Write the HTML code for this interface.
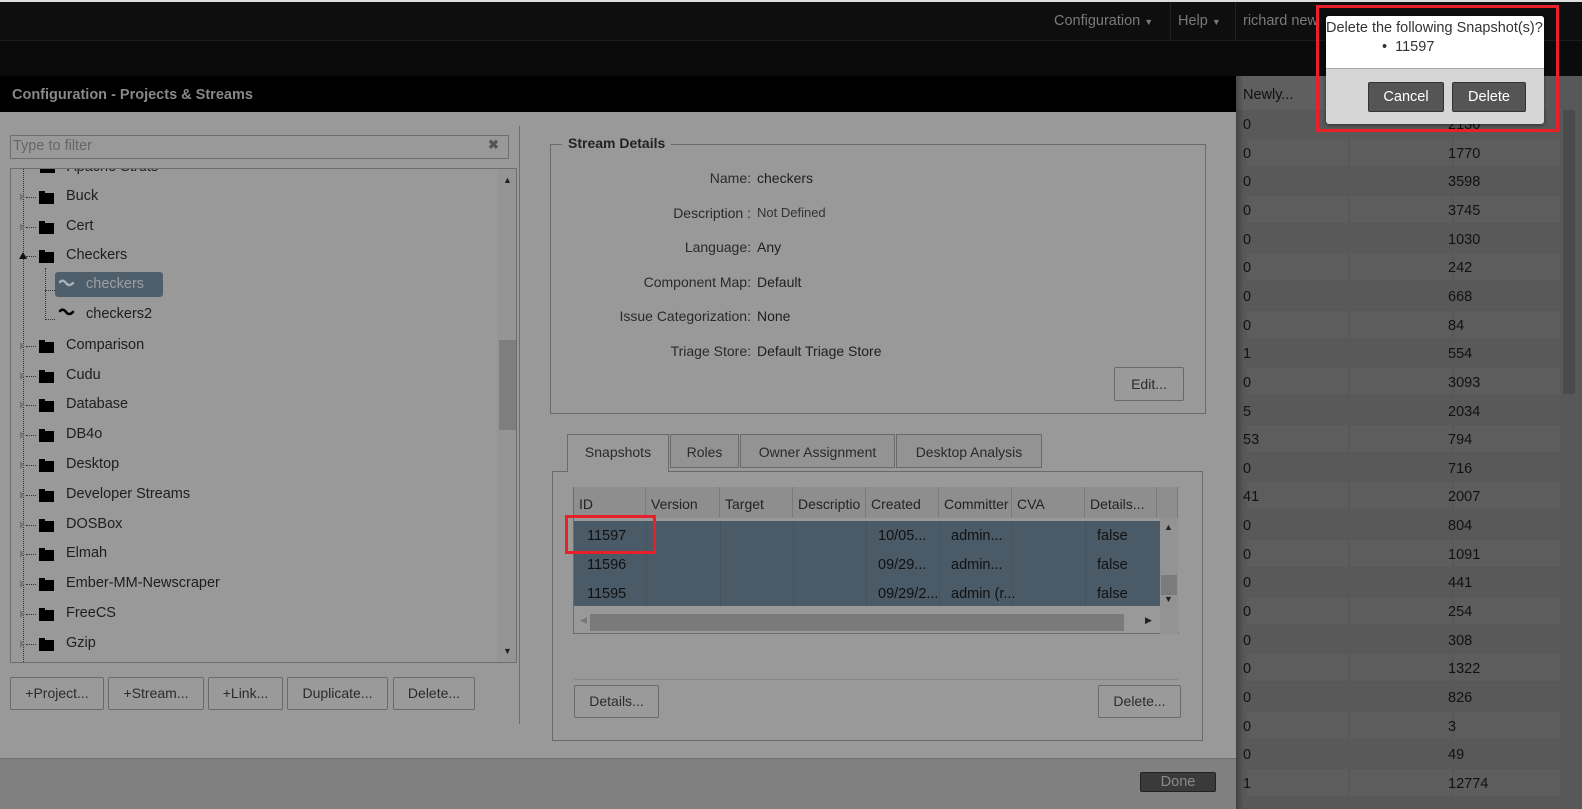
<!DOCTYPE html>
<html><head><meta charset="utf-8"><style>
*{box-sizing:border-box;margin:0;padding:0}
body{width:1582px;height:809px;position:relative;overflow:hidden;background:#5a5a5a;font-family:"Liberation Sans",Arial,sans-serif;font-size:14px;color:#1a1a1a}
.a{position:absolute}
.btn{position:absolute;border:1px solid #6a6a6a;border-radius:2px;background:#9a9a9a;color:#2b2b2b;font-size:14px;text-align:center}
.tr{position:absolute;left:66px;font-size:14.5px;color:#1e1e1e}
.fold{position:absolute;left:39px;width:15px;height:11px;background:#000}
.fold:before{content:"";position:absolute;left:0;top:-2px;width:6px;height:3px;background:#000}
.exp{position:absolute;left:20px;width:0;height:0;border-top:4px solid transparent;border-bottom:4px solid transparent;border-left:5px solid #777}
.dash{position:absolute;left:26px;width:10px;border-top:1px dotted #333}
.lbl{position:absolute;width:200px;text-align:right;left:551px;color:#2a2a2a}
.val{position:absolute;left:757px;color:#1e1e1e}
.rc{position:absolute;font-size:14.5px;color:#111}
</style></head><body>
<div class="a" style="left:0;top:0;width:1582px;height:2px;background:#ddd"></div>
<div class="a" style="left:0;top:2px;width:1582px;height:38px;background:#0e0e0e"></div>
<div class="a" style="left:0;top:40px;width:1582px;height:36px;background:#0b0b0b;border-top:1px solid #1c1c1c"></div>
<div class="a" style="left:1054px;top:13px;color:#7a7a7a;font-size:14.5px">Configuration <span style="font-size:9px">▼</span></div>
<div class="a" style="left:1170px;top:2px;width:1px;height:38px;background:#222"></div>
<div class="a" style="left:1178px;top:13px;color:#7a7a7a;font-size:14.5px">Help <span style="font-size:9px">▼</span></div>
<div class="a" style="left:1235px;top:2px;width:1px;height:38px;background:#222"></div>
<div class="a" style="left:1243px;top:13px;color:#7a7a7a;font-size:14.5px">richard new</div>

<div class="a" style="left:1236px;top:76px;width:346px;height:733px;background:#585858"></div>
<div class="a" style="left:1236px;top:76px;width:312px;height:34px;background:#5f5f5f"></div>
<div class="rc" style="left:1243px;top:87px">Newly...</div>
<div id="rt"></div>
<div class="a" style="left:1563px;top:110px;width:12px;height:284px;background:#4a4a4a"></div>

<div class="a" style="left:0;top:76px;width:1236px;height:36px;background:#000"></div>
<div class="a" style="left:12px;top:87px;color:#888;font-weight:bold;font-size:14.5px">Configuration - Projects &amp; Streams</div>
<div class="a" style="left:0;top:112px;width:1236px;height:646px;background:#999"></div>
<div class="a" style="left:0;top:758px;width:1236px;height:51px;background:#808080;border-top:1px solid #6e6e6e"></div>
<div class="a" style="left:1140px;top:772px;width:76px;height:20px;background:#3a3a3a;border:1px solid #222;border-radius:2px;color:#8a8a8a;text-align:center;font-size:14.5px;line-height:18px">Done</div>
<div class="a" style="left:1236px;top:76px;width:8px;height:733px;background:linear-gradient(90deg,rgba(0,0,0,.25),rgba(0,0,0,0))"></div>

<div class="a" style="left:10px;top:135px;width:499px;height:24px;border:1px solid #6e6e6e;background:#999"></div>
<div class="a" style="left:13px;top:138px;color:#666;font-size:14.5px">Type to filter</div>
<div class="a" style="left:488px;top:137px;color:#555;font-size:13px;font-weight:bold">✖</div>
<div class="a" style="left:519px;top:126px;width:1px;height:598px;background:#6e6e6e"></div>
<div class="a" style="left:10px;top:168px;width:507px;height:495px;border:1px solid #6e6e6e;overflow:hidden">
<div class="a" style="left:12px;top:0;width:0;height:495px;border-left:1px dotted #333"></div>
<div class="a" style="left:486px;top:0;width:20px;height:493px;background:#959595"></div>
<div class="a" style="left:488px;top:171px;width:17px;height:90px;background:#7e7e7e"></div>
<div class="a" style="left:492px;top:6px;font-size:9px;color:#222">▲</div>
<div class="a" style="left:492px;top:477px;font-size:9px;color:#222">▼</div>
<div class="a" style="left:29px;top:-7px;width:15px;height:11px;background:#000"></div>
<div class="a" style="left:56px;top:-10px;font-size:14.5px;color:#1e1e1e">Apache Struts</div>
</div>
<div id="tree"></div>
<div class="a" style="left:55px;top:272px;width:108px;height:25px;background:#4e5f6b;border-radius:3px"></div>
<svg class="a" style="left:58px;top:279px" width="18" height="10"><path d="M2 3 Q5 0 8 4 Q11 8 15 4" stroke="#a9b2b8" stroke-width="2.4" fill="none" stroke-linecap="round"/></svg>
<div class="a" style="left:86px;top:276px;color:#9a9fa3;font-size:14.5px">checkers</div>
<svg class="a" style="left:58px;top:308px" width="18" height="10"><path d="M2 3 Q5 0 8 4 Q11 8 15 4" stroke="#000" stroke-width="2.6" fill="none" stroke-linecap="round"/></svg>
<div class="a" style="left:86px;top:306px;color:#1e1e1e;font-size:14.5px">checkers2</div>
<div class="a" style="left:45px;top:268px;width:0;height:52px;border-left:1px dotted #333"></div>
<div class="a" style="left:45px;top:290px;width:10px;border-top:1px dotted #333"></div>
<div class="a" style="left:45px;top:319px;width:10px;border-top:1px dotted #333"></div>

<div class="btn" style="left:10px;top:677px;width:94px;height:33px;line-height:31px">+Project...</div>
<div class="btn" style="left:108px;top:677px;width:96px;height:33px;line-height:31px">+Stream...</div>
<div class="btn" style="left:208px;top:677px;width:75px;height:33px;line-height:31px">+Link...</div>
<div class="btn" style="left:287px;top:677px;width:101px;height:33px;line-height:31px">Duplicate...</div>
<div class="btn" style="left:393px;top:677px;width:82px;height:33px;line-height:31px">Delete...</div>

<div class="a" style="left:550px;top:144px;width:656px;height:270px;border:1px solid #6a6a6a"></div>
<div class="a" style="left:562px;top:135px;padding:0 6px;background:#999;font-weight:bold;color:#222;font-size:14px">Stream Details</div>
<div class="lbl" style="top:170px">Name:</div><div class="val" style="top:170px">checkers</div>
<div class="lbl" style="top:205px">Description :</div><div class="val" style="top:205px;font-size:13px;color:#333">Not Defined</div>
<div class="lbl" style="top:239px">Language:</div><div class="val" style="top:239px">Any</div>
<div class="lbl" style="top:274px">Component Map:</div><div class="val" style="top:274px">Default</div>
<div class="lbl" style="top:308px">Issue Categorization:</div><div class="val" style="top:308px">None</div>
<div class="lbl" style="top:343px">Triage Store:</div><div class="val" style="top:343px">Default Triage Store</div>
<div class="btn" style="left:1114px;top:367px;width:70px;height:34px;line-height:32px">Edit...</div>

<div class="a" style="left:552px;top:471px;width:651px;height:270px;border:1px solid #6a6a6a"></div>
<div class="a" style="left:567px;top:434px;width:102px;height:38px;border:1px solid #6a6a6a;border-bottom:none;background:#999;text-align:center;line-height:34px;color:#2a2a2a">Snapshots</div>
<div class="a" style="left:670px;top:434px;width:69px;height:34px;border:1px solid #6a6a6a;background:#939393;text-align:center;line-height:34px;color:#2a2a2a">Roles</div>
<div class="a" style="left:740px;top:434px;width:155px;height:34px;border:1px solid #6a6a6a;background:#939393;text-align:center;line-height:34px;color:#2a2a2a">Owner Assignment</div>
<div class="a" style="left:896px;top:434px;width:146px;height:34px;border:1px solid #6a6a6a;background:#939393;text-align:center;line-height:34px;color:#2a2a2a">Desktop Analysis</div>

<div class="a" style="left:573px;top:487px;width:606px;height:147px;border-bottom:1px solid #6a6a6a;border-left:1px solid #6a6a6a;background:#999"></div>
<div class="a" style="left:574px;top:487px;width:604px;height:31px;background:#8e8e8e"></div>
<div id="hdr"></div>
<div class="a" style="left:574px;top:521px;width:586px;height:85px;background:#4a5a66"></div>
<div id="grows"></div>
<div class="a" style="left:1160px;top:518px;width:18px;height:116px;background:#939393"></div>
<div class="a" style="left:1161px;top:575px;width:16px;height:20px;background:#7b7b7b"></div>
<div class="a" style="left:1164px;top:522px;font-size:9px;color:#222">▲</div>
<div class="a" style="left:1164px;top:594px;font-size:9px;color:#222">▼</div>
<div class="a" style="left:590px;top:614px;width:534px;height:17px;background:#7a7a7a"></div>
<div class="a" style="left:580px;top:615px;font-size:9px;color:#777">◀</div>
<div class="a" style="left:1145px;top:615px;font-size:9px;color:#222">▶</div>
<div class="a" style="left:574px;top:679px;width:604px;height:1px;background:#888"></div>
<div class="btn" style="left:574px;top:685px;width:85px;height:33px;line-height:31px">Details...</div>
<div class="btn" style="left:1098px;top:685px;width:83px;height:33px;line-height:31px">Delete...</div>

<div class="a" style="left:565px;top:515px;width:91px;height:39px;border:3px solid #e8202a"></div>

<div class="a" style="left:1326px;top:16px;width:218px;height:108px;background:#d6d6d6;border-radius:3px;box-shadow:0 1px 4px rgba(0,0,0,.5);overflow:hidden">
<div class="a" style="left:0;top:0;width:218px;height:53px;background:#fff;border-bottom:1px solid #aaa"></div>
<div class="a" style="left:0;top:4px;font-size:14.5px;color:#333;white-space:nowrap">Delete the following Snapshot(s)?</div>
<div class="a" style="left:56px;top:23px;font-size:14.5px;color:#333">•&nbsp; 11597</div>
<div class="a" style="left:42px;top:66px;width:76px;height:30px;background:#555;border:1px solid #333;border-radius:2px;color:#fff;text-align:center;line-height:28px;font-size:14.5px">Cancel</div>
<div class="a" style="left:126px;top:66px;width:74px;height:30px;background:#555;border:1px solid #333;border-radius:2px;color:#fff;text-align:center;line-height:28px;font-size:14.5px">Delete</div>
</div>
<div class="a" style="left:1316px;top:5px;width:243px;height:127px;border:3px solid #e8202a"></div>

<script>
var t=document.getElementById('tree'),h='';
var names=['','Buck','Cert','Checkers','','','Comparison','Cudu','Database','DB4o','Desktop','Developer Streams','DOSBox','Elmah','Ember-MM-Newscraper','FreeCS','Gzip'];
for(var i=1;i<names.length;i++){if(!names[i])continue;var c=167+i*29.8;
h+='<div class="fold" style="top:'+(c-4)+'px"></div><div class="tr" style="top:'+(c-9)+'px">'+names[i]+'</div>';
h+='<div class="dash" style="top:'+c+'px"></div>';
if(i==3)h+='<div class="a" style="left:19px;top:'+(c-4)+'px;width:0;height:0;border-left:4px solid transparent;border-right:4px solid transparent;border-bottom:7px solid #111"></div>';
else h+='<div class="exp" style="top:'+(c-4)+'px"></div>';}
t.innerHTML=h;
var v=[['0','2136'],['0','1770'],['0','3598'],['0','3745'],['0','1030'],['0','242'],['0','668'],['0','84'],['1','554'],['0','3093'],['5','2034'],['53','794'],['0','716'],['41','2007'],['0','804'],['0','1091'],['0','441'],['0','254'],['0','308'],['0','1322'],['0','826'],['0','3'],['0','49'],['1','12774']];
h='';for(i=0;i<v.length;i++){var y=110+i*28.65;var c=i%2?'#5d5d5d':'#595959';
h+='<div class="a" style="left:1247px;top:'+y+'px;width:101px;height:27px;background:'+c+'"></div><div class="a" style="left:1350px;top:'+y+'px;width:102px;height:27px;background:'+c+'"></div><div class="a" style="left:1454px;top:'+y+'px;width:106px;height:27px;background:'+c+'"></div>';
h+='<div class="rc" style="left:1243px;top:'+(y+7)+'px">'+v[i][0]+'</div><div class="rc" style="left:1448px;top:'+(y+7)+'px">'+v[i][1]+'</div>';}
document.getElementById('rt').innerHTML=h;
var hd=[['ID',574],['Version',646],['Target',720],['Descriptio',793],['Created',866],['Committer',939],['CVA',1012],['Details...',1085],['',1157]];
h='';for(i=0;i<hd.length;i++){h+='<div class="a" style="left:'+hd[i][1]+'px;top:487px;height:31px;width:'+((i<8?hd[i+1][1]:1178)-hd[i][1])+'px;border-right:1px solid #7a7a7a;padding:9px 0 0 5px;color:#222;overflow:hidden;white-space:nowrap">'+hd[i][0]+'</div>';}
document.getElementById('hdr').innerHTML=h;
var r=[['11597','10/05...','admin...'],['11596','09/29...','admin...'],['11595','09/29/2...','admin (r...']];
h='';for(i=0;i<3;i++){var y=521+i*29;
h+='<div class="rc" style="left:587px;top:'+(y+7)+'px">'+r[i][0]+'</div><div class="rc" style="left:878px;top:'+(y+7)+'px">'+r[i][1]+'</div><div class="rc" style="left:951px;top:'+(y+7)+'px">'+r[i][2]+'</div><div class="rc" style="left:1097px;top:'+(y+7)+'px">false</div>';}
[646,720,793,866,939,1012,1085].forEach(function(x){h+='<div class="a" style="left:'+x+'px;top:521px;width:1px;height:85px;background:#44535e"></div>'});
document.getElementById('grows').innerHTML=h;
</script>
</body></html>
